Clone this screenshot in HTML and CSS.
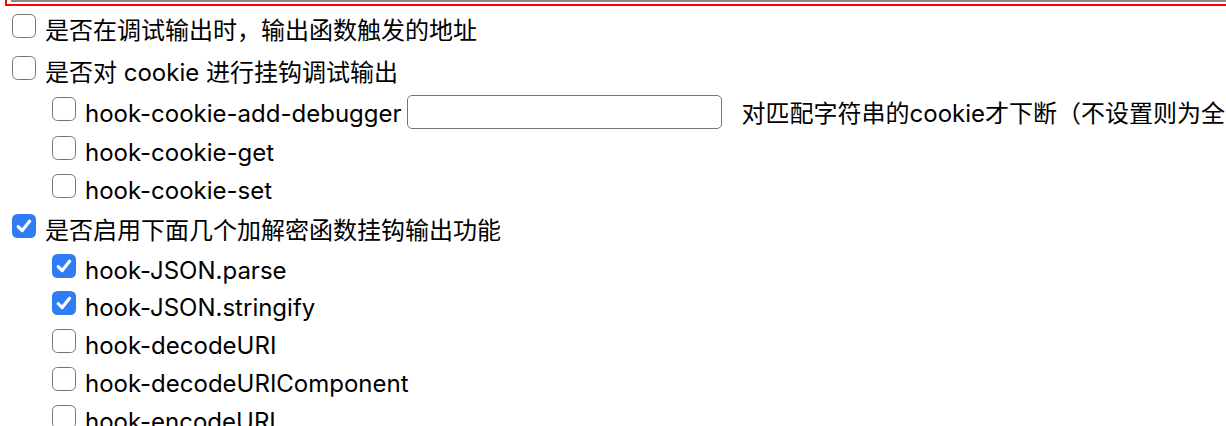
FILE: index.html
```html
<!DOCTYPE html>
<html lang="zh-CN">
<head>
<meta charset="utf-8">
<title>hook options</title>
<link rel="stylesheet" href="styles.css">
</head>
<body>
<div class="frame"><div class="frame-inner"></div></div>
<div class="list">
  <div class="row cjk">
    <span class="box"></span><span class="label">是否在调试输出时，输出函数触发的地址</span>
  </div>
  <div class="row cjk">
    <span class="box"></span><span class="label">是否对 cookie 进行挂钩调试输出</span>
  </div>
  <div class="row sub with-field">
    <span class="box"></span><span class="label">hook-cookie-add-debugger</span><input class="field" type="text"><span class="label">对匹配字符串的cookie才下断（不设置则为全部cookie下断）</span>
  </div>
  <div class="row sub">
    <span class="box"></span><span class="label">hook-cookie-get</span>
  </div>
  <div class="row sub">
    <span class="box"></span><span class="label">hook-cookie-set</span>
  </div>
  <div class="row cjk">
    <span class="box checked"><svg viewBox="0 0 24 24" width="24" height="24"><path d="M6.2 12.6 L10.2 16.6 L17.6 7.2" fill="none" stroke="#fff" stroke-width="3.2" stroke-linecap="round" stroke-linejoin="round"/></svg></span><span class="label">是否启用下面几个加解密函数挂钩输出功能</span>
  </div>
  <div class="row sub">
    <span class="box checked"><svg viewBox="0 0 24 24" width="24" height="24"><path d="M6.2 12.6 L10.2 16.6 L17.6 7.2" fill="none" stroke="#fff" stroke-width="3.2" stroke-linecap="round" stroke-linejoin="round"/></svg></span><span class="label">hook-JSON.parse</span>
  </div>
  <div class="row sub">
    <span class="box checked"><svg viewBox="0 0 24 24" width="24" height="24"><path d="M6.2 12.6 L10.2 16.6 L17.6 7.2" fill="none" stroke="#fff" stroke-width="3.2" stroke-linecap="round" stroke-linejoin="round"/></svg></span><span class="label">hook-JSON.stringify</span>
  </div>
  <div class="row sub">
    <span class="box"></span><span class="label">hook-decodeURI</span>
  </div>
  <div class="row sub">
    <span class="box"></span><span class="label">hook-decodeURIComponent</span>
  </div>
  <div class="row sub">
    <span class="box"></span><span class="label">hook-encodeURI</span>
  </div>
</div>
</body>
</html>
```
FILE: styles.css
```css
html, body {
  margin: 0;
  padding: 0;
  background: #fff;
  overflow: hidden;
}
body {
  font-family: Inter, "Noto Sans CJK SC", sans-serif;
  font-size: 24px;
  color: #000;
}
.frame {
  margin-left: 5px;
  height: 4px;
  border-left: 2px solid #f00;
  border-bottom: 2px solid #f00;
}
.frame-inner {
  margin-left: 4px;
  height: 2px;
  background: #8a8a8a;
}
.row {
  display: flex;
  align-items: flex-start;
  box-sizing: border-box;
  height: 37.8px;
  padding-left: 12px;
  white-space: nowrap;
}
.row.cjk {
  height: 42px;
  padding-top: 2px;
}
.row.with-field {
  height: 40px;
  padding-top: 1px;
}
.row.sub {
  padding-left: 52px;
}
.box {
  flex: none;
  display: block;
  width: 24px;
  height: 24px;
  box-sizing: border-box;
  border: 1.6px solid #767676;
  border-radius: 5.5px;
  margin-top: 6px;
  margin-right: 9px;
  background: #fff;
}
.box.checked {
  border: none;
  background: #2f7cf6;
}
.box svg {
  display: block;
}
.label {
  flex: none;
  line-height: 24px;
  margin-top: 11px;
}
.field {
  flex: none;
  width: 315px;
  height: 34px;
  box-sizing: border-box;
  border: 1.6px solid #767676;
  border-radius: 5px;
  margin: 4px 20px 0 5px;
  padding: 0 6px;
  background: #fff;
  font: inherit;
  outline: none;
}
```
